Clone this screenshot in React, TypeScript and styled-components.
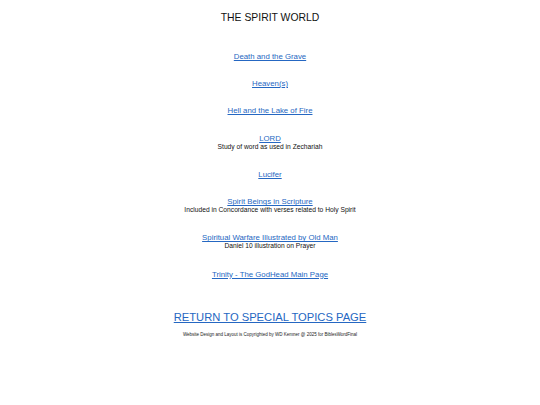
import React from "react";
import styled, { createGlobalStyle } from "styled-components";

const Global = createGlobalStyle`
  html, body { margin: 0; padding: 0; background: #ffffff; }
  body { font-family: "Liberation Sans", Arial, sans-serif; color: #111; }
`;

const Page = styled.main`
  display: flex;
  flex-direction: column;
  align-items: center;
  text-align: center;
  padding-top: 11.5px;
`;

const Title = styled.h1`
  margin: 0;
  font-size: 10.4px;
  line-height: 12px;
  font-weight: 400;
  color: #111;
`;

const List = styled.ul`
  list-style: none;
  margin: 28px 0 0;
  padding: 0;
  display: flex;
  flex-direction: column;
  align-items: center;
  gap: 18.4px;
`;

const Item = styled.li`
  display: flex;
  flex-direction: column;
  align-items: center;
`;

const Link = styled.a<{ $size?: number; $lh?: number }>`
  color: #2567c2;
  text-decoration: underline;
  font-size: ${(p) => p.$size ?? 7.8}px;
  line-height: ${(p) => p.$lh ?? 9}px;
`;

const Note = styled.span`
  font-size: 6.7px;
  line-height: 8.8px;
  color: #111;
`;

const Return = styled.div`
  margin-top: 28px;
`;

const Footer = styled.footer`
  margin-top: 7px;
  font-size: 4.5px;
  line-height: 5px;
  color: #222;
`;

const items: { label: string; note?: string }[] = [
  { label: "Death and the Grave" },
  { label: "Heaven(s)" },
  { label: "Hell and the Lake of Fire" },
  { label: "LORD", note: "Study of word as used in Zechariah" },
  { label: "Lucifer" },
  { label: "Spirit Beings in Scripture", note: "Included in Concordance with verses related to Holy Spirit" },
  { label: "Spiritual Warfare Illustrated by Old Man", note: "Daniel 10 illustration on Prayer" },
  { label: "Trinity - The GodHead Main Page" },
];

export default function App() {
  return (
    <>
      <Global />
      <Page>
        <Title>THE SPIRIT WORLD</Title>
        <List>
          {items.map((it) => (
            <Item key={it.label}>
              <Link href="#">{it.label}</Link>
              {it.note && <Note>{it.note}</Note>}
            </Item>
          ))}
        </List>
        <Return>
          <Link href="#" $size={11.2} $lh={13}>
            RETURN TO SPECIAL TOPICS PAGE
          </Link>
        </Return>
        <Footer>
          Website Design and Layout is Copyrighted by WD Kemner @ 2025 for BiblesWordFinal
        </Footer>
      </Page>
    </>
  );
}
